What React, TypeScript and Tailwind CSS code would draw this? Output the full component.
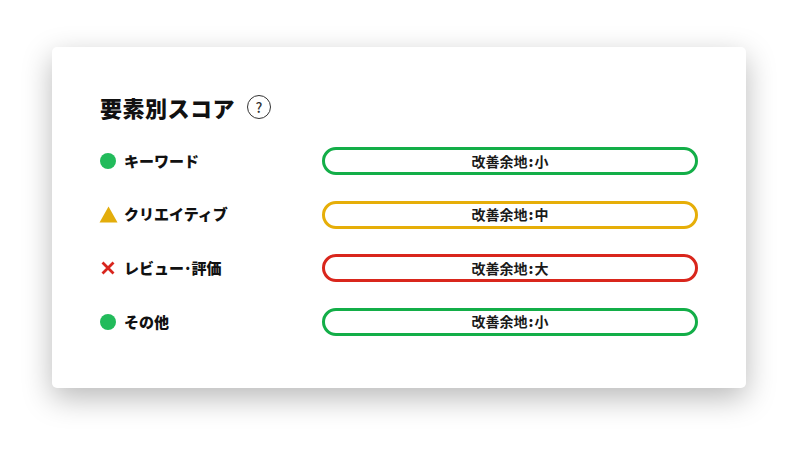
import React from "react";

const font = { fontFamily: '"Noto Sans CJK JP", "Noto Sans", sans-serif' };

function Circle() {
  return (
    <svg width="18" height="18" viewBox="0 0 18 18" className="shrink-0">
      <circle cx="9" cy="9" r="8" fill="#22bb5b" />
    </svg>
  );
}
function Tri() {
  return (
    <svg width="19" height="17" viewBox="0 0 19 17" className="shrink-0">
      <path d="M9.5 0.5 L18.5 16.5 L0.5 16.5 Z" fill="#e3ad0b" />
    </svg>
  );
}
function Cross() {
  return (
    <svg width="18" height="18" viewBox="0 0 18 18" className="shrink-0">
      <path d="M3.5 3.5 L14.5 14.5 M14.5 3.5 L3.5 14.5" stroke="#d8251d" strokeWidth="2.8" strokeLinecap="butt" />
    </svg>
  );
}

const rows = [
  { icon: <Circle />, label: "キーワード", level: "小", border: "border-[#13ae48]" },
  { icon: <Tri />, label: "クリエイティブ", level: "中", border: "border-[#e6ae08]" },
  { icon: <Cross />, label: "レビュー･評価", level: "大", border: "border-[#d9261c]" },
  { icon: <Circle />, label: "その他", level: "小", border: "border-[#13ae48]" },
];

export default function App() {
  return (
    <div className="w-[800px] h-[449px] bg-white pt-[47px] pl-[52px]" style={font}>
      <div className="w-[694px] h-[341px] bg-white rounded-[5px] shadow-[0_10px_30px_rgba(0,0,0,0.28)] pt-[44px] pl-[48px] pr-[48px]">
        <div className="flex items-center h-[32px]">
          <span className="text-[22px] font-black text-[#111] leading-[32px] tracking-[0.5px]">要素別スコア</span>
          <span className="ml-[12px] w-[24px] h-[24px] rounded-full border-[1.5px] border-[#333] flex items-center justify-center text-[14px] font-medium text-[#333] leading-none">
            ?
          </span>
        </div>
        <div className="mt-[24px] flex flex-col gap-[25.67px]">
          {rows.map((r, i) => (
            <div key={i} className="flex items-center h-[28px]">
              <div className="w-[222px] flex items-center gap-[7px]">
                <div className="w-[18px] flex justify-center -ml-[1px]">{r.icon}</div>
                <span className="text-[15px] font-black text-[#111]">{r.label}</span>
              </div>
              <div className={`w-[376px] h-[28px] rounded-full border-[3px] ${r.border} flex items-center justify-center`}>
                <span className="text-[14px] font-bold text-[#1a1a1a]">
                  改善余地<span className="font-black mx-[1px]">:</span>{r.level}
                </span>
              </div>
            </div>
          ))}
        </div>
      </div>
    </div>
  );
}
